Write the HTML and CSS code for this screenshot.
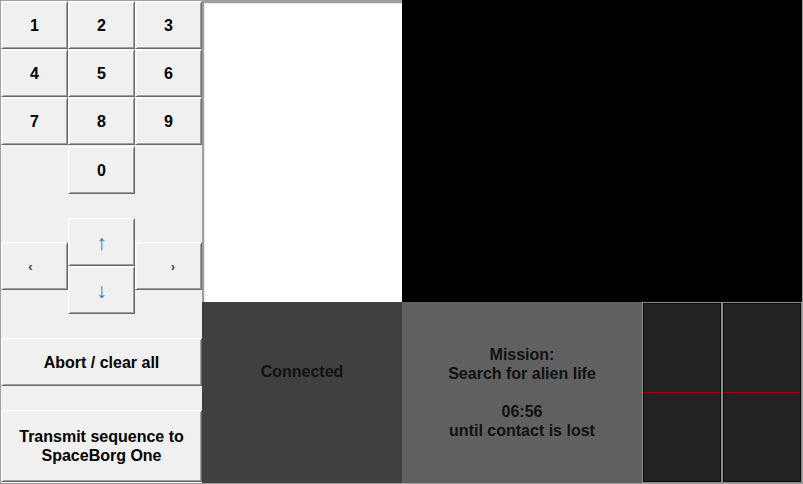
FILE: index.html
```html
<!DOCTYPE html>
<html>
<head>
<meta charset="utf-8">
<link rel="stylesheet" href="styles.css">
</head>
<body>
<div class="app">
  <div class="controls">
    <div class="keypad">
      <button class="key">1</button>
      <button class="key">2</button>
      <button class="key">3</button>
      <button class="key">4</button>
      <button class="key">5</button>
      <button class="key">6</button>
      <button class="key">7</button>
      <button class="key">8</button>
      <button class="key">9</button>
    </div>
    <div class="zero-row"><button class="key zero">0</button></div>
    <div class="arrows">
      <button class="key arrow up">↑</button>
      <button class="key arrow left">‹</button>
      <button class="key arrow right">›</button>
      <button class="key arrow down">↓</button>
    </div>
    <button class="key wide abort">Abort / clear all</button>
    <button class="key wide transmit">Transmit sequence to<br>SpaceBorg One</button>
  </div>
  <div class="canvas"></div>
  <div class="video"></div>
  <div class="status">Connected</div>
  <div class="mission">
    <div>Mission:</div>
    <div>Search for alien life</div>
    <div>&nbsp;</div>
    <div>06:56</div>
    <div>until contact is lost</div>
  </div>
  <div class="scope"><div class="trace"></div></div>
  <div class="scope"><div class="trace"></div></div>
</div>
</body>
</html>
```
FILE: styles.css
```css
html, body {
  margin: 0;
  padding: 0;
  background: #f0f0f0;
}

.app {
  width: 803px;
  height: 484px;
  box-sizing: border-box;
  border: 1px solid #a0a0a0;
  display: grid;
  grid-template-columns: 201px 200px 240px 80px 80px;
  grid-template-rows: 301px 181px;
  font-family: "Liberation Sans", Arial, sans-serif;
  font-weight: bold;
  font-size: 16px;
  color: #000;
  background: #f0f0f0;
}

.controls {
  grid-column: 1;
  grid-row: 1 / 3;
  display: flex;
  flex-direction: column;
  background: #f0f0f0;
}

.key {
  margin: 0;
  padding: 0;
  box-sizing: border-box;
  background: #f0f0f0;
  font: inherit;
  color: #000;
  border: 1px solid;
  border-color: #ffffff #696969 #696969 #ffffff;
  box-shadow: inset 1px 1px #f7f7f7, inset -1px -1px #a0a0a0;
  line-height: 19px;
  text-align: center;
  cursor: default;
}

.keypad {
  display: grid;
  grid-template-columns: repeat(3, 67px);
  grid-template-rows: repeat(3, 48px);
}

.zero-row {
  display: grid;
  grid-template-columns: repeat(3, 67px);
  height: 48px;
  margin-top: 1px;
  margin-bottom: 24px;
}

.zero {
  grid-column: 2;
}

.arrows {
  display: grid;
  grid-template-columns: repeat(3, 67px);
  grid-template-rows: repeat(4, 24px);
  margin-bottom: 24px;
}

.arrow {
  color: #2a78c8;
  font-weight: normal;
}

.up {
  grid-column: 2;
  grid-row: 1 / 3;
  font-size: 21px;
}

.down {
  grid-column: 2;
  grid-row: 3 / 5;
  font-size: 21px;
}

.left {
  grid-column: 1;
  grid-row: 2 / 4;
  font-size: 13px;
  color: #1f3f78;
  font-weight: bold;
  padding-right: 8px;
}

.right {
  grid-column: 3;
  grid-row: 2 / 4;
  font-size: 13px;
  color: #1f3f78;
  font-weight: bold;
  padding-left: 9px;
}

.wide {
  width: 201px;
}

.abort {
  height: 48px;
  margin-bottom: 24px;
}

.transmit {
  height: 72px;
}

.canvas {
  grid-column: 2;
  grid-row: 1;
  background: #ffffff;
  border-top: 2px solid #a0a0a0;
  border-left: 2px solid #a0a0a0;
  box-shadow: inset 1px 1px #e6e6e6;
}

.video {
  grid-column: 3 / 6;
  grid-row: 1;
  background: #000000;
  margin-top: -1px;
}

.status {
  grid-column: 2;
  grid-row: 2;
  background: #404040;
  color: #111111;
  text-align: center;
  line-height: 19px;
  padding-top: 60px;
  box-sizing: border-box;
}

.mission {
  grid-column: 3;
  grid-row: 2;
  background: #606060;
  color: #111111;
  line-height: 19px;
  text-align: center;
  display: flex;
  flex-direction: column;
  justify-content: center;
}

.scope {
  background: #222222;
  border: 1px solid #8a8a8a;
  box-shadow: inset 1px 1px #0c0c0c, inset -1px -1px #0c0c0c;
  box-sizing: border-box;
  padding: 89px 1px 0;
}

.trace {
  height: 1px;
  background: #a00000;
}
```
